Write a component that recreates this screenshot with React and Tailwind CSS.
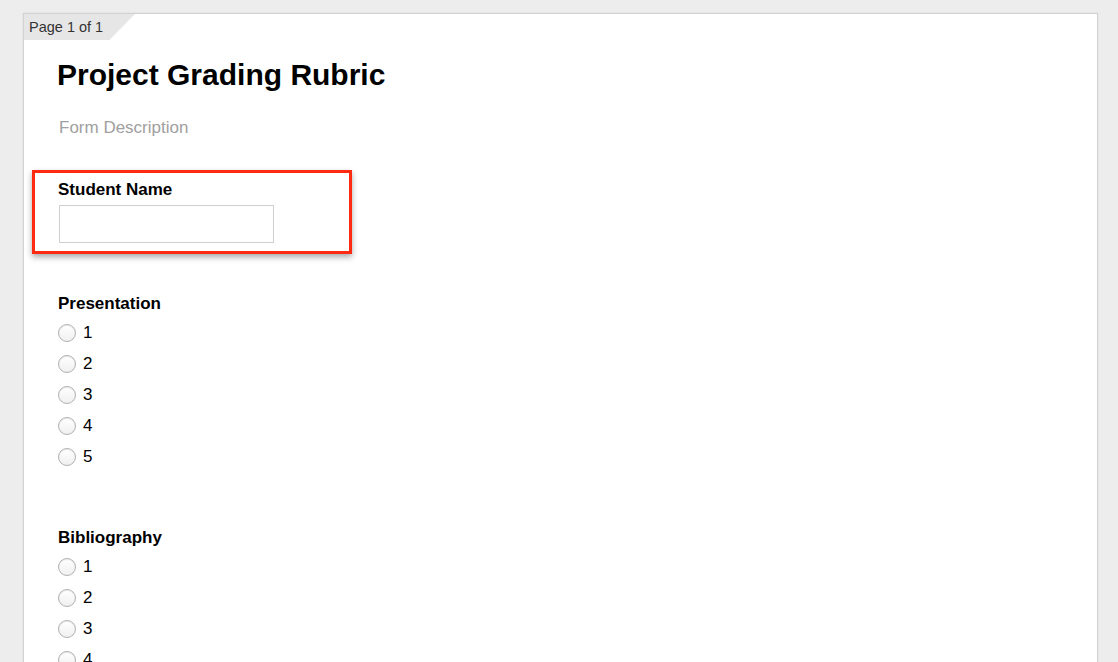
export default function App() {
  const Radio = ({ label }) => (
    <div className="flex items-center h-[31px]">
      <span className="w-[18px] h-[18px] rounded-full border-[1.5px] border-[#b0b0b0] bg-gradient-to-b from-[#ffffff] to-[#f0f0f0] shadow-[inset_0_1px_1px_rgba(0,0,0,0.08)]" />
      <span className="ml-[7px] text-[17px] text-black">{label}</span>
    </div>
  );
  return (
    <div
      className="w-[1118px] h-[662px] overflow-hidden bg-[#ededed] pt-[13px] pl-[23px] pr-[20px]"
      style={{ fontFamily: '"Liberation Sans", Arial, sans-serif' }}
    >
      <div className="bg-white border border-[#d2d2d2] h-[700px] shadow-[0_0_2px_rgba(0,0,0,0.08)]">
        <div className="flex">
          <div className="h-[26px] w-[111px] bg-[#e6e6e6] [clip-path:polygon(0_0,100%_0,77%_100%,0_100%)] pl-[5px] text-[14.5px] leading-[26px] text-[#333]">
            Page 1 of 1
          </div>
        </div>
        <div className="pl-[33px]">
          <h1 className="mt-[18px] text-[30px] leading-[34px] font-bold text-black">Project Grading Rubric</h1>
          <p className="mt-[26px] pl-[2px] text-[17px] leading-[20px] text-[#a0a0a0]">Form Description</p>
        </div>
        <div className="ml-[8px] mt-[32px] w-[320px] border-[3px] border-[#ff2a12] shadow-[0_3px_6px_rgba(0,0,0,0.35)] pt-[7px] pb-[8px] pl-[23px]">
          <div className="text-[17px] leading-[20px] font-bold text-black">Student Name</div>
          <div className="mt-[5px] ml-[1px] w-[215px] h-[38px] border border-[#cfcfcf] bg-white" />
        </div>
        <div className="pl-[34px]">
          <div className="mt-[40px] text-[17px] leading-[20px] font-bold text-black">Presentation</div>
          <div className="mt-[3px]">
            {["1", "2", "3", "4", "5"].map((n) => (
              <Radio key={n} label={n} />
            ))}
          </div>
          <div className="mt-[56px] text-[17px] leading-[20px] font-bold text-black">Bibliography</div>
          <div className="mt-[3px]">
            {["1", "2", "3", "4", "5"].map((n) => (
              <Radio key={n} label={n} />
            ))}
          </div>
        </div>
      </div>
    </div>
  );
}
